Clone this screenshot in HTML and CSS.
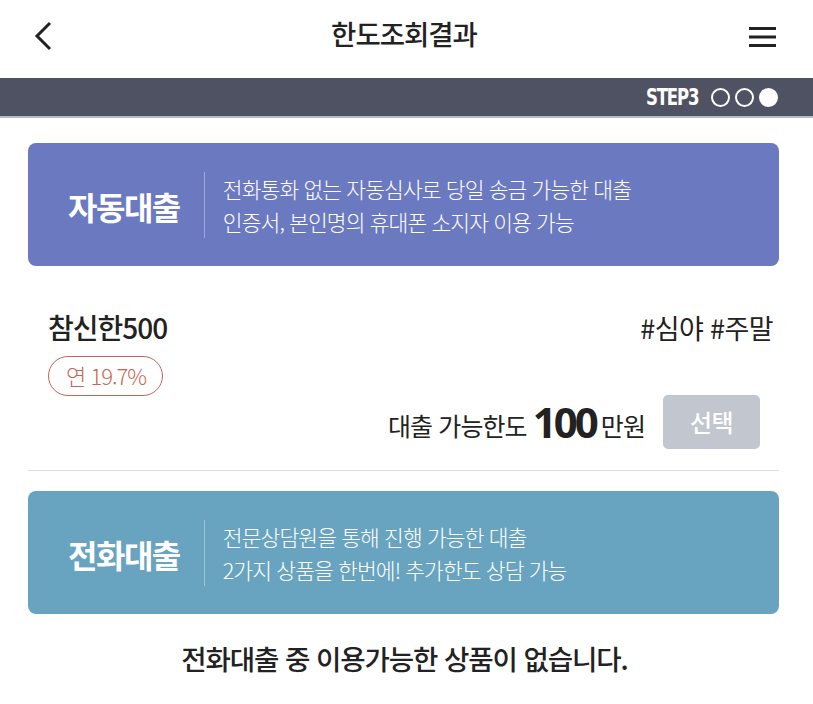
FILE: index.html
```html
<!DOCTYPE html>
<html lang="ko">
<head>
<meta charset="utf-8">
<title>한도조회결과</title>
<link rel="stylesheet" href="styles.css">
</head>
<body>
<header class="topbar">
  <svg class="icon-back" width="20" height="30" viewBox="0 0 20 30"><path d="M17 2 L4 15 L17 28" fill="none" stroke="#222" stroke-width="3"/></svg>
  <h1 class="title">한도조회결과</h1>
  <svg class="icon-menu" width="28" height="22" viewBox="0 0 28 22"><rect x="0" y="1" width="27" height="3" fill="#222"/><rect x="0" y="9.5" width="27" height="3" fill="#222"/><rect x="0" y="18" width="27" height="3" fill="#222"/></svg>
</header>
<div class="stepbar">
  <span class="step-label">STEP3</span>
  <span class="dot"></span><span class="dot"></span><span class="dot dot-on"></span>
</div>
<main class="content">
  <section class="banner banner-auto">
    <div class="banner-name">자동대출</div>
    <div class="banner-desc">
      <p>전화통화 없는 자동심사로 당일 송금 가능한 대출</p>
      <p>인증서, 본인명의 휴대폰 소지자 이용 가능</p>
    </div>
  </section>
  <section class="product">
    <div class="product-top">
      <div class="product-name">참신한500</div>
      <div class="product-tags">#심야 #주말</div>
    </div>
    <div class="rate">연 19.7%</div>
    <div class="product-bottom">
      <span class="limit-label">대출 가능한도</span>
      <span class="limit-amount">100</span>
      <span class="limit-unit">만원</span>
      <button class="select-btn">선택</button>
    </div>
  </section>
  <section class="banner banner-call">
    <div class="banner-name">전화대출</div>
    <div class="banner-desc">
      <p>전문상담원을 통해 진행 가능한 대출</p>
      <p>2가지 상품을 한번에! 추가한도 상담 가능</p>
    </div>
  </section>
  <p class="empty">전화대출 중 이용가능한 상품이 없습니다.</p>
</main>
</body>
</html>
```
FILE: styles.css
```css
* { box-sizing: border-box; }
body {
  margin: 0;
  background: #fff;
  font-family: "Noto Sans CJK KR", "Noto Sans", sans-serif;
  color: #222;
}
p { margin: 0; }
.topbar {
  height: 78px;
  display: flex;
  align-items: center;
  justify-content: space-between;
  padding: 0 36px 0 33px;
}
.icon-back { margin-top: -6px; }
.icon-menu { margin-top: -4px; }
.title {
  margin: 0 0 13px 6px;
  font-size: 27.5px;
  font-weight: 500;
  letter-spacing: -1px;
  color: #222;
}
.stepbar {
  height: 40px;
  background: #4f5262;
  border-bottom: 2px solid #b9bbc2;
  display: flex;
  align-items: center;
  justify-content: flex-end;
  padding-right: 35px;
  gap: 5px;
}
.step-label {
  font-family: "DejaVu Sans Condensed", "Liberation Sans Narrow", sans-serif;
  font-weight: 700;
  color: #fff;
  font-size: 23px;
  letter-spacing: -1.5px;
  margin-right: 8px;
  transform: scaleX(0.8);
  transform-origin: right center;
}
.dot {
  width: 19px;
  height: 19px;
  border-radius: 50%;
  border: 2px solid #fff;
}
.dot-on { background: #fff; }
.content {
  padding: 25px 34px 0 28px;
}
.banner {
  height: 123px;
  border-radius: 8px;
  display: flex;
  align-items: center;
  color: #fff;
  padding-left: 40px;
}
.banner-auto { background: #6b79c1; }
.banner-call { background: #68a4c0; }
.banner-name {
  font-size: 32px;
  font-weight: 700;
  letter-spacing: -1.5px;
  padding-right: 24px;
  margin-top: 2px;
}
.banner-desc {
  border-left: 1.5px solid rgba(255,255,255,0.35);
  padding: 0 0 0 18px;
  font-size: 21.5px;
  font-weight: 300;
  letter-spacing: -0.9px;
  line-height: 33px;
}
.product {
  border-bottom: 1.5px solid #dcdcdc;
  padding: 42px 0 20px 20px;
}
.product-top {
  display: flex;
  justify-content: space-between;
  align-items: baseline;
}
.product-name {
  font-size: 28px;
  font-weight: 500;
  letter-spacing: -1px;
  line-height: 36px;
}
.product-tags {
  font-size: 27px;
  font-weight: 400;
  letter-spacing: -0.6px;
  padding-right: 6px;
}
.rate {
  display: inline-block;
  margin-top: 9px;
  height: 40px;
  line-height: 36px;
  padding: 0 16px 0 17px;
  border: 1.5px solid #c46655;
  border-radius: 20px;
  color: #c46655;
  font-size: 22px;
  font-weight: 300;
  letter-spacing: -1px;
}
.product-bottom {
  display: flex;
  align-items: center;
  justify-content: flex-end;
  margin-top: -3px;
  padding-right: 19px;
}
.limit-label {
  font-size: 25px;
  font-weight: 400;
  letter-spacing: -0.9px;
  margin-top: 6px;
}
.limit-amount {
  font-size: 42px;
  font-weight: 700;
  letter-spacing: -3px;
  margin: 0 5px 0 6px;
  font-family: "Noto Sans", sans-serif;
}
.limit-unit {
  font-size: 25px;
  font-weight: 400;
  letter-spacing: -0.9px;
  margin-top: 6px;
}
.select-btn {
  margin-left: 18px;
  width: 97px;
  height: 54px;
  border: 0;
  border-radius: 5px;
  background: #c2c6cf;
  color: #fff;
  font-family: inherit;
  font-size: 24px;
  font-weight: 500;
  letter-spacing: -0.5px;
}
.banner-call { margin-top: 20px; }
.empty {
  text-align: center;
  font-size: 27.6px;
  font-weight: 500;
  letter-spacing: -1.1px;
  margin-top: 24px;
  padding-left: 2px;
}
```
